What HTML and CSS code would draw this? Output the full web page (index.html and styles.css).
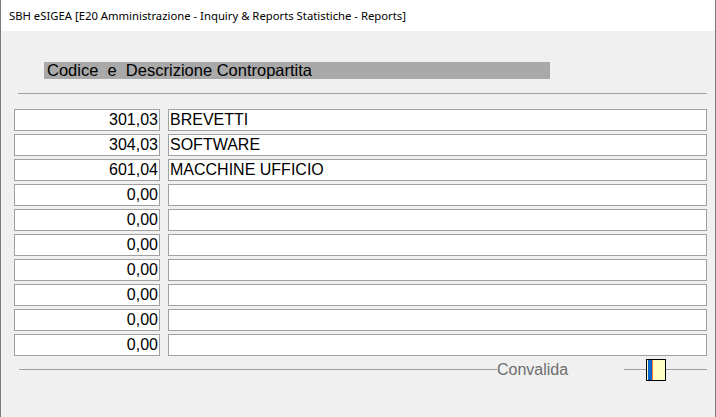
FILE: index.html
```html
<!DOCTYPE html>
<html>
<head>
<meta charset="utf-8">
<link rel="stylesheet" href="styles.css">
</head>
<body>
<div class="win">
  <div class="titlebar">SBH eSIGEA [E20 Amministrazione - Inquiry &amp; Reports Statistiche - Reports]</div>
  <div class="content">
    <div class="header">Codice  e  Descrizione Contropartita</div>
    <div class="rule"></div>
    <div class="rows">
      <div class="row"><div class="code">301,03</div><div class="desc">BREVETTI</div></div>
      <div class="row"><div class="code">304,03</div><div class="desc">SOFTWARE</div></div>
      <div class="row"><div class="code">601,04</div><div class="desc">MACCHINE UFFICIO</div></div>
      <div class="row"><div class="code">0,00</div><div class="desc"></div></div>
      <div class="row"><div class="code">0,00</div><div class="desc"></div></div>
      <div class="row"><div class="code">0,00</div><div class="desc"></div></div>
      <div class="row"><div class="code">0,00</div><div class="desc"></div></div>
      <div class="row"><div class="code">0,00</div><div class="desc"></div></div>
      <div class="row"><div class="code">0,00</div><div class="desc"></div></div>
      <div class="row"><div class="code">0,00</div><div class="desc"></div></div>
    </div>
    <div class="footer">
      <div class="line l1"></div>
      <div class="label">Convalida</div>
      <div class="spacer"></div>
      <div class="line l2"></div>
      <div class="btn"><span class="blue"></span><span class="orange"></span></div>
      <div class="line l3"></div>
    </div>
  </div>
</div>
</body>
</html>
```
FILE: styles.css
```css
html, body {
  margin: 0;
  padding: 0;
  background: #f0f0f0;
}
.win {
  width: 716px;
  height: 417px;
  box-sizing: border-box;
  border-left: 1px solid #7a7a7a;
  border-right: 1px solid #7a7a7a;
  background: #f0f0f0;
  overflow: hidden;
}
.titlebar {
  height: 31px;
  background: #ffffff;
  font-family: "Noto Sans", sans-serif;
  font-size: 11.3px;
  line-height: 31px;
  padding-left: 8px;
  color: #000;
  white-space: nowrap;
}
.content {
  padding-top: 31px;
  font-family: "Liberation Sans", Arial, sans-serif;
}
.header {
  margin-left: 43px;
  width: 506px;
  height: 17px;
  background: #a9a9a9;
  font-size: 16.5px;
  line-height: 17px;
  padding-left: 3px;
  box-sizing: border-box;
  white-space: pre;
  color: #000;
}
.rule {
  margin: 14px 8px 0 17px;
  height: 1px;
  background: #a0a0a0;
}
.rows {
  margin-top: 15px;
  margin-left: 13px;
  margin-right: 8px;
  display: flex;
  flex-direction: column;
  gap: 3px;
}
.row {
  display: flex;
  gap: 8px;
  height: 22px;
}
.code, .desc {
  box-sizing: border-box;
  height: 22px;
  border: 1px solid #a0a0a0;
  background: #fff;
  font-size: 16px;
  line-height: 20px;
  color: #000;
  white-space: nowrap;
}
.code {
  width: 146px;
  text-align: right;
  padding-right: 1px;
}
.desc {
  flex: 1;
  padding-left: 1px;
}
.footer {
  margin-top: 3px;
  margin-left: 18px;
  margin-right: 8px;
  height: 22px;
  display: flex;
  align-items: center;
}
.line {
  height: 1px;
  background: #a0a0a0;
  margin-top: -1px;
}
.l1 { width: 478px; }
.label {
  font-size: 16px;
  color: #6d6d6d;
  line-height: 20px;
  margin-top: -1px;
}
.spacer { width: 56px; }
.l2 { width: 22px; }
.l3 { flex: 1; }
.btn {
  box-sizing: border-box;
  width: 20px;
  height: 22px;
  border: 1px solid #000;
  background: #ffffc4;
  display: flex;
  padding-left: 1px;
}
.blue {
  width: 4px;
  background: #0a64d0;
}
.orange {
  width: 1px;
  background: #ff7a30;
}
```
